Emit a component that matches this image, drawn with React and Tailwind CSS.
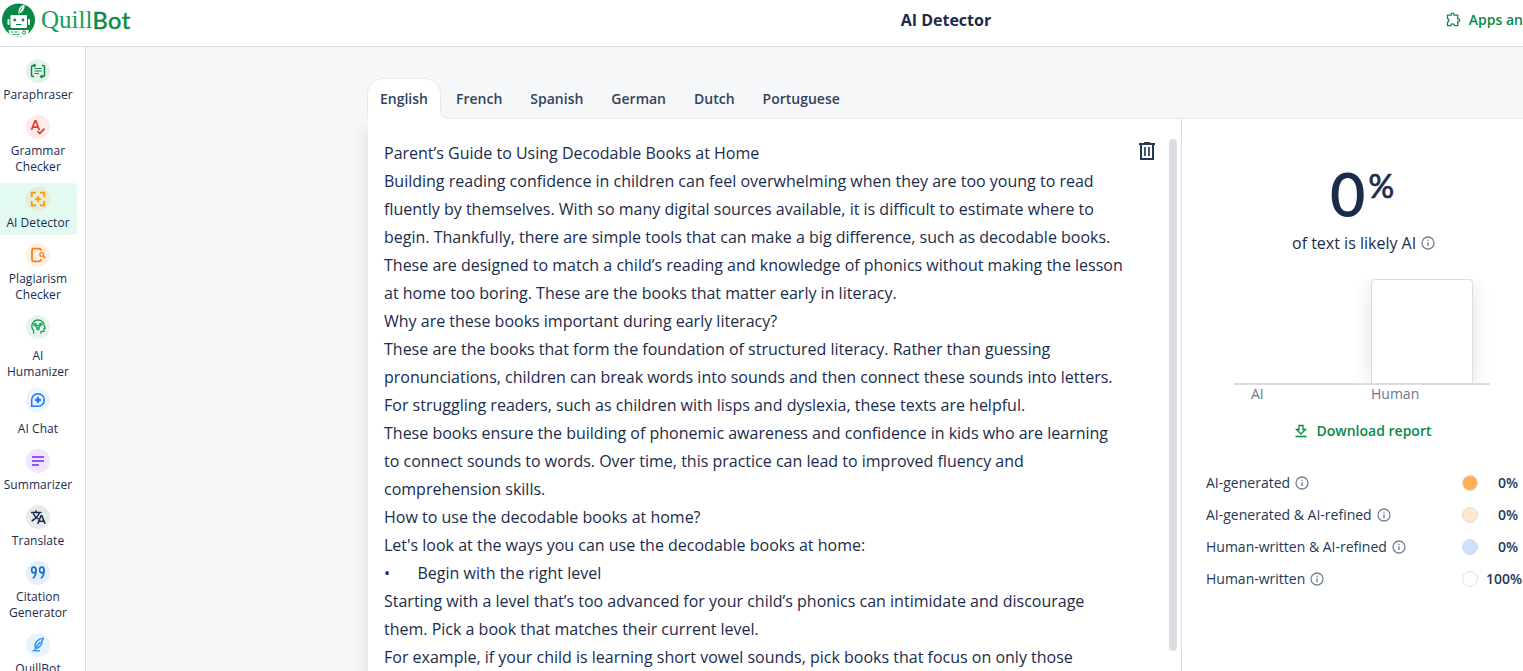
import React from 'react';
import clsx from 'clsx';

const stroke = { fill: 'none', stroke: 'currentColor', strokeWidth: 1.5 };

const ParaphraseIcon = () => (
  <svg width="16" height="16" viewBox="0 0 16 16" {...stroke}>
    <path d="M5.500 2.500H3Q1.500 2.500 1.500 4v8q0 1.500 1.500 1.500h1M3.800 1 5.300 2.500 3.800 4M10.500 13.500H13q1.500 0 1.500-1.500V4q0-1.500-1.500-1.500h-1M12.200 15l-1.500-1.500 1.500-1.500" />
    <path d="M4.500 5.500h7M4.500 8h7M4.500 10.500h4.500" strokeWidth="1.200" />
  </svg>
);

const GrammarIcon = () => (
  <svg width="16" height="16" viewBox="0 0 16 16" {...stroke} strokeWidth="1.800">
    <path d="M1.500 11 5 2h.8l3.500 9M2.800 8.200h5.200" />
    <path d="m7.500 12.200 2.300 2.200 4.700-4.700" />
  </svg>
);

const DetectorIcon = () => (
  <svg width="16" height="16" viewBox="0 0 16 16" {...stroke} strokeWidth="1.700">
    <path d="M1.700 6V1.700H6M10 1.700h4.300V6M14.300 10v4.300H10M6 14.300H1.700V10" />
    <path d="m8 4.800.9 2.300 2.300.9-2.300.9L8 11.200l-.9-2.300L4.800 8l2.300-.9z" fill="currentColor" strokeWidth=".5" />
  </svg>
);

const PlagiarismIcon = () => (
  <svg width="16" height="16" viewBox="0 0 16 16" {...stroke}>
    <path d="M10.800 4V3.200Q10.800 1.700 9.300 1.700H3.500Q2 1.700 2 3.200v9.600q0 1.500 1.500 1.500h5.800q1.500 0 1.500-1.500V12" strokeWidth="1.700" />
    <circle cx="11.700" cy="7.500" r="1.900" strokeWidth="1.200" />
    <path d="m13.200 9 2.200 2.100" />
  </svg>
);

const HumanizerIcon = () => (
  <svg width="16" height="16" viewBox="0 0 16 16" {...stroke} strokeWidth="1.300">
    <path d="M3.600 14.800v-3.300A6.200 6.200 0 0 1 8 1c3.500 0 6 2.300 6.200 5.500l1 2.800-1.400.6v2.400H11v2.500" />
    <path d="M5.500 5.800 8 6.600l2.700-1" />
    <circle cx="4.900" cy="5.500" r="1.100" />
    <circle cx="11" cy="5.300" r="1.100" />
    <circle cx="8" cy="9.700" r="1.100" />
    <path d="m5.500 6.500 2 2.400m3-2.600-2 2.600" />
  </svg>
);

const ChatIcon = () => (
  <svg width="16" height="16" viewBox="0 0 16 16" {...stroke}>
    <path d="M1.700 14.300V8A6.300 6.300 0 1 1 8 14.300z" />
    <path d="m8 4.800 1 2.200 2.200 1L9 9l-1 2.200L7 9 4.800 8 7 7z" fill="currentColor" strokeWidth="1" />
  </svg>
);

const SummarizerIcon = () => (
  <svg width="16" height="16" viewBox="0 0 16 16" {...stroke} strokeWidth="1.500">
    <path d="M2 3.900h12M2 8h12M2 12.100h7" />
  </svg>
);

const TranslateIcon = () => (
  <svg width="16" height="16" viewBox="0 0 16 16" {...stroke}>
    <path d="M1 3.500h10.500M6 1.300v2.200M9.500 3.500Q7.800 8.600 1.700 12M3.200 4.500Q4.800 8 8.500 10.200" />
    <path d="m7.700 14.800 3.300-8h.8l3.300 8M9 12.200h5" strokeWidth="1.600" />
  </svg>
);

const CitationIcon = () => (
  <svg width="16" height="16" viewBox="0 0 16 16" {...stroke} strokeWidth="1.600">
    <ellipse cx="3.800" cy="5" rx="2.200" ry="2.900" />
    <path d="M6 4.500q.5 5.500-3 9" />
    <ellipse cx="11.800" cy="5" rx="2.200" ry="2.900" />
    <path d="M14 4.500q.5 5.500-3 9" />
  </svg>
);

const QuillIcon = () => (
  <svg width="16" height="16" viewBox="0 0 16 16" {...stroke}>
    <path d="M2.500 13.800h7.500M4.800 13.300 7.200 8.500 10.500 5" />
    <path d="M5.500 11.300C3.800 6 8 1.700 13.200 1.300q-.2 1.500-1.100 2.400.3 1-.7 2.300l.3.600Q9.500 11 5.500 11.300z" />
  </svg>
);

const navItems = [
  { label: 'Paraphraser', icon: ParaphraseIcon, height: 'h-[52px]', color: 'bg-[#e4f3ea] text-[#078a45]' },
  { label: 'Grammar Checker', icon: GrammarIcon, height: 'h-[68px]', color: 'bg-[#fdeaea] text-[#e34132]' },
  { label: 'AI Detector', icon: DetectorIcon, height: 'h-[52px]', color: 'bg-[#e7edd3] text-[#f5980c]', active: true },
  { label: 'Plagiarism Checker', icon: PlagiarismIcon, height: 'h-[68px]', color: 'bg-[#fff0e4] text-[#f77f11]' },
  { label: 'AI Humanizer', icon: HumanizerIcon, height: 'h-[69px]', color: 'bg-[#e6f6ee] text-[#17a35b]', roomy: true },
  { label: 'AI Chat', icon: ChatIcon, height: 'h-[57px]', color: 'bg-[#eaf4ff] text-[#1c75ff]', roomy: true },
  { label: 'Summarizer', icon: SummarizerIcon, height: 'h-[52px]', color: 'bg-[#efe5ff] text-[#7a1fff]' },
  { label: 'Translate', icon: TranslateIcon, height: 'h-[52px]', color: 'bg-[#e8e9ed] text-[#1b2b4b]' },
  { label: 'Citation Generator', icon: CitationIcon, height: 'h-[68px]', color: 'bg-[#e3effb] text-[#1170c9]' },
  { label: 'QuillBot', icon: QuillIcon, height: 'h-[52px]', color: 'bg-[#e8f3ff] text-[#3397fb]' },
];

const languages = ['French', 'Spanish', 'German', 'Dutch', 'Portuguese'];

const lines = [
  'Parent’s Guide to Using Decodable Books at Home',
  'Building reading confidence in children can feel overwhelming when they are too young to read',
  'fluently by themselves. With so many digital sources available, it is difficult to estimate where to',
  'begin. Thankfully, there are simple tools that can make a big difference, such as decodable books.',
  'These are designed to match a child’s reading and knowledge of phonics without making the lesson',
  'at home too boring. These are the books that matter early in literacy.',
  'Why are these books important during early literacy?',
  'These are the books that form the foundation of structured literacy. Rather than guessing',
  'pronunciations, children can break words into sounds and then connect these sounds into letters.',
  'For struggling readers, such as children with lisps and dyslexia, these texts are helpful.',
  'These books ensure the building of phonemic awareness and confidence in kids who are learning',
  'to connect sounds to words. Over time, this practice can lead to improved fluency and',
  'comprehension skills.',
  'How to use the decodable books at home?',
  "Let's look at the ways you can use the decodable books at home:",
  '•\tBegin with the right level',
  'Starting with a level that’s too advanced for your child’s phonics can intimidate and discourage',
  'them. Pick a book that matches their current level.',
  'For example, if your child is learning short vowel sounds, pick books that focus on only those',
];

const breakdown = [
  { label: 'AI-generated', value: '0%', dot: 'bg-[#ffaf50]' },
  { label: 'AI-generated & AI-refined', value: '0%', dot: 'bg-[#ffe7ca]' },
  { label: 'Human-written & AI-refined', value: '0%', dot: 'bg-[#cce0ff]' },
  { label: 'Human-written', value: '100%', dot: 'bg-white' },
];

const InfoIcon = () => (
  <svg width="14" height="14" viewBox="0 0 14 14" fill="none" stroke="#75829a" strokeWidth="1.300" className="shrink-0">
    <circle cx="7" cy="7" r="6" />
    <path d="M7 6.200V10M7 3.700v1.400" strokeWidth="1.400" />
  </svg>
);

const Logo = () => (
  <div className="flex items-center text-[#078a45]">
    <svg width="34" height="34" viewBox="0 0 34 34" className="shrink-0">
      <circle cx="16.500" cy="17" r="16.500" fill="#078a45" />
      <g fill="#fff">
        <rect x="8.500" y="12" width="16.500" height="13" rx="1.200" />
        <rect x="5.500" y="16" width="2" height="6" rx="1" />
        <rect x="26" y="16" width="2" height="6" rx="1" />
        <path d="M16.500 10.500C16 6 18 3 22.500 1.500c.5 4-1.500 7.500-5 9z" />
        <path d="M6.500 27h20.500l-1 4Q16.500 36 7.500 31z" />
      </g>
      <path d="m17.300 9.500 3-5.500" stroke="#078a45" strokeWidth=".7" />
      <g fill="#078a45">
        <circle cx="12.700" cy="17" r="1.400" />
        <circle cx="21" cy="17" r="1.400" />
        <path d="M14 21h5.500v1H14z" />
      </g>
      <path d="M8.500 29h9m-7 2.500h7" stroke="#078a45" strokeWidth=".8" strokeDasharray="3 1" />
      <circle cx="22" cy="29.500" r="1.600" fill="none" stroke="#078a45" strokeWidth=".9" />
    </svg>
    <span className="ml-[5px] font-['Liberation_Serif',serif] text-[25px] leading-[34px] text-[#14a05a]">Quill</span>
    <span className="font-[Lato,sans-serif] text-[23.5px] font-normal leading-[34px] tracking-[0.6px] [-webkit-text-stroke:0.5px_#078a45]">Bot</span>
  </div>
);

const Header = () => (
  <header className="flex h-[47px] shrink-0 border-b border-[#dadee3] bg-white">
    <div className="w-[447px] pl-[2px] pt-[3px]">
      <Logo />
    </div>
    <h1 className="flex-1 pt-2 text-center text-base font-bold leading-6">AI Detector</h1>
    <div className="flex h-10 items-center gap-2 whitespace-nowrap text-sm font-semibold text-[#078a45]">
      <svg width="16" height="16" viewBox="0 0 16 16" {...stroke}>
        <path d="M2.500 3.200h3.600V2.700a1.500 1.500 0 0 1 3 0v.5h3.600v3.600h.5a1.500 1.500 0 0 1 0 3h-.5v3.900H9.500a1.800 1.800 0 0 0-3.600 0H2.500v-3.500a1.800 1.800 0 0 0 0-3.500z" strokeWidth="1.300" />
      </svg>
      <span>Apps an</span>
    </div>
  </header>
);

const Sidebar = () => (
  <nav className="flex w-[86px] shrink-0 flex-col gap-1 overflow-hidden border-r border-[#dadee3] bg-white pt-2">
    {navItems.map(({ label, icon: Icon, height, color, active, roomy }) => (
      <a
        key={label}
        className={clsx('flex w-[77px] shrink-0 flex-col items-center rounded-r pr-px pt-1', height, active && 'bg-[#e3faf0]', roomy ? 'gap-[9px]' : 'gap-1')}
      >
        <span className={clsx('flex size-6 shrink-0 items-center justify-center rounded-full', color)}>
          <Icon />
        </span>
        <span className="w-[75px] text-center text-xs leading-4 tracking-[0.05px]">{label}</span>
      </a>
    ))}
  </nav>
);

const LanguageTabs = () => (
  <div className="flex h-[41px] items-stretch text-sm font-semibold text-[#33425d]">
    <div className="relative w-[74px] shrink-0 rounded-t-2xl border border-b-0 border-[#e7eaed] bg-white pt-[10px] text-center leading-5">
      English
      <svg width="9" height="10" viewBox="0 0 9 10" className="absolute bottom-0 left-[72px]">
        <path d="M0 0h.5Q.5 9.500 9 9.500V10H0z" fill="#fff" />
        <path d="M.5 0Q.5 9.500 9 9.500" fill="none" stroke="#e7eaed" />
      </svg>
    </div>
    <div className="flex flex-1 gap-7 border-b border-[#e7eaed] pl-[15px] pt-[11px] leading-5">
      {languages.map((language) => (
        <span key={language}>{language}</span>
      ))}
    </div>
  </div>
);

const Editor = () => (
  <section className="ml-px flex w-[813px] shrink-0 bg-white pl-4 shadow-[-6px_8px_12px_-2px_rgba(0,0,0,0.08)]">
    <div className="w-[755px] shrink-0 pt-5 text-base leading-7">
      {lines.map((line) => (
        <p key={line} className="whitespace-pre [tab-size:33.5px]">{line}</p>
      ))}
    </div>
    <svg width="16" height="19" viewBox="0 0 16 19" className="mt-[23px] shrink-0" fill="none" stroke="#263858">
      <path d="M0 2h16M5 1h6" strokeWidth="2" />
      <path d="M2 2v15h12V2" strokeWidth="2" />
      <path d="M6 5v9M10 5v9" strokeWidth="1.700" />
    </svg>
    <div className="ml-[14px] mt-5 h-[512px] w-2 shrink-0 rounded-full bg-[#dadee3]" />
  </section>
);

const Results = () => (
  <section className="flex flex-1 flex-col border-l border-[#dadee3] bg-white pl-6">
    <div className="flex flex-col pt-[38px]">
      <div className="ml-[124px] flex h-[76px] items-start font-[Lato,sans-serif]">
        <span className="text-[61px] font-semibold leading-[74px]">0</span>
        <span className="ml-[3px] pt-[11px] text-[32px] font-normal leading-9 [-webkit-text-stroke:0.7px_#1b2b4b]">%</span>
      </div>
      <div className="ml-[86px] flex items-center gap-[5px] whitespace-nowrap text-base leading-5">
        of text is likely AI <InfoIcon />
      </div>
    </div>

    <div className="ml-7 mt-[26px] flex h-[106px] w-[256px] justify-end border-b-2 border-[#dadee3] pr-[17px]">
      <div className="h-[104px] w-[102px] rounded-t border border-b-0 border-[#dadee3] shadow-[0_4px_20px_rgba(0,0,0,0.12)] [clip-path:inset(0_-24px_0_-24px)]" />
    </div>
    <div className="-mt-px flex text-sm leading-5 text-[#6b7890]">
      <span className="ml-[45px] w-[120px]">AI</span>
      <span>Human</span>
    </div>

    <button className="ml-[88px] mt-[15px] flex items-center gap-[8.500px] whitespace-nowrap text-sm font-semibold leading-6 text-[#078a45]">
      <svg width="14" height="14" viewBox="0 0 14 14" {...stroke} strokeWidth="1.300">
        <path d="M5 1.500h4v4h2.500L7 10 2.500 5.500H5zM1.500 12.500h11" />
      </svg>
      Download report
    </button>

    <ul className="mt-6 w-[316px] text-sm text-[#263858]">
      {breakdown.map(({ label, value, dot }) => (
        <li key={label} className="flex h-8 items-center whitespace-nowrap">
          <span className="mr-[5px]">{label}</span>
          <InfoIcon />
          <span className={clsx('ml-auto size-4 rounded-full border border-[#dadee3]', dot)} />
          <span className={clsx('ml-1 w-[40px] text-right font-semibold', value === '0%' && 'pr-1')}>{value}</span>
        </li>
      ))}
    </ul>
  </section>
);

export default function App() {
  return (
    <div className="flex h-[671px] w-[1523px] flex-col overflow-hidden font-['Open_Sans',sans-serif] text-[#1b2b4b]">
      <Header />
      <div className="flex min-h-0 flex-1">
        <Sidebar />
        <main className="flex min-w-0 flex-1 flex-col bg-[#f6f7f9] pl-[281px] pt-[31px]">
          <LanguageTabs />
          <div className="flex min-h-0 flex-1">
            <Editor />
            <Results />
          </div>
        </main>
      </div>
    </div>
  );
}
